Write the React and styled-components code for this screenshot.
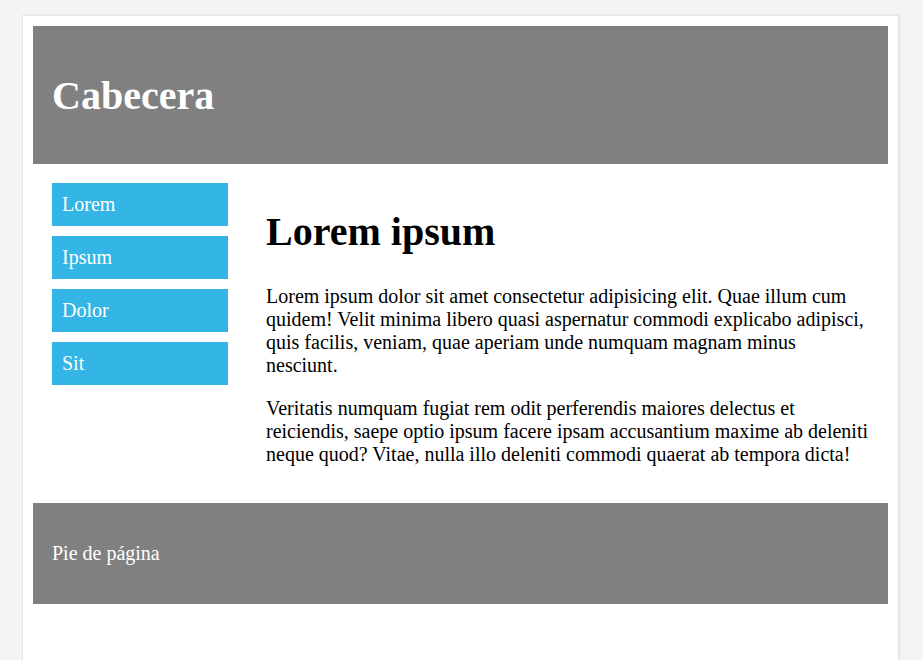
import React from "react";
import styled, { createGlobalStyle } from "styled-components";

const Global = createGlobalStyle`
  html, body { margin: 0; padding: 0; background: #f3f4f6; }
  body { font-family: "Liberation Serif", "Times New Roman", serif; color: #000; }
  * { box-sizing: border-box; }
`;

const Panel = styled.div`
  width: 877px;
  min-height: 660px;
  margin: 15px 0 0 22px;
  padding: 10px;
  background: #fff;
  border: 1px solid #e3e4e8;
  box-shadow: 1px 0 3px rgba(0, 0, 0, 0.06);
  display: grid;
  grid-template-columns: 214px 1fr;
  grid-template-rows: 138px auto 101px;
  align-content: start;
`;

const Header = styled.header`
  grid-column: 1 / -1;
  background: #808080;
  color: #fff;
  display: flex;
  align-items: center;
  padding: 0 19px;
`;

const Title = styled.h1`
  margin: 0;
  font-size: 40px;
  font-weight: bold;
`;

const Sidebar = styled.nav`
  padding: 19px;
  display: flex;
  flex-direction: column;
  gap: 10px;
`;

const NavItem = styled.a`
  display: block;
  background: #33b5e5;
  color: #fff;
  font-size: 20px;
  line-height: 23px;
  padding: 10px;
  text-decoration: none;
`;

const Main = styled.main`
  padding: 19px 19px 17px;
`;

const Heading = styled.h2`
  margin: 26px 0 30px;
  font-size: 40px;
  line-height: 46px;
  font-weight: bold;
`;

const Para = styled.p`
  margin: 0 0 20px;
  font-size: 20px;
  line-height: 23px;
`;

const Footer = styled.footer`
  grid-column: 1 / -1;
  background: #808080;
  color: #fff;
  display: flex;
  align-items: center;
  padding: 0 19px;
  font-size: 20px;
`;

const items = ["Lorem", "Ipsum", "Dolor", "Sit"];

export default function App() {
  return (
    <>
      <Global />
      <Panel>
        <Header>
          <Title>Cabecera</Title>
        </Header>
        <Sidebar>
          {items.map((t) => (
            <NavItem key={t} href="#">
              {t}
            </NavItem>
          ))}
        </Sidebar>
        <Main>
          <Heading>Lorem ipsum</Heading>
          <Para>
            Lorem ipsum dolor sit amet consectetur adipisicing elit. Quae illum cum quidem! Velit minima libero quasi
            aspernatur commodi explicabo adipisci, quis facilis, veniam, quae aperiam unde numquam magnam minus
            nesciunt.
          </Para>
          <Para>
            Veritatis numquam fugiat rem odit perferendis maiores delectus et reiciendis, saepe optio ipsum facere ipsam
            accusantium maxime ab deleniti neque quod? Vitae, nulla illo deleniti commodi quaerat ab tempora dicta!
          </Para>
        </Main>
        <Footer>Pie de página</Footer>
      </Panel>
    </>
  );
}
